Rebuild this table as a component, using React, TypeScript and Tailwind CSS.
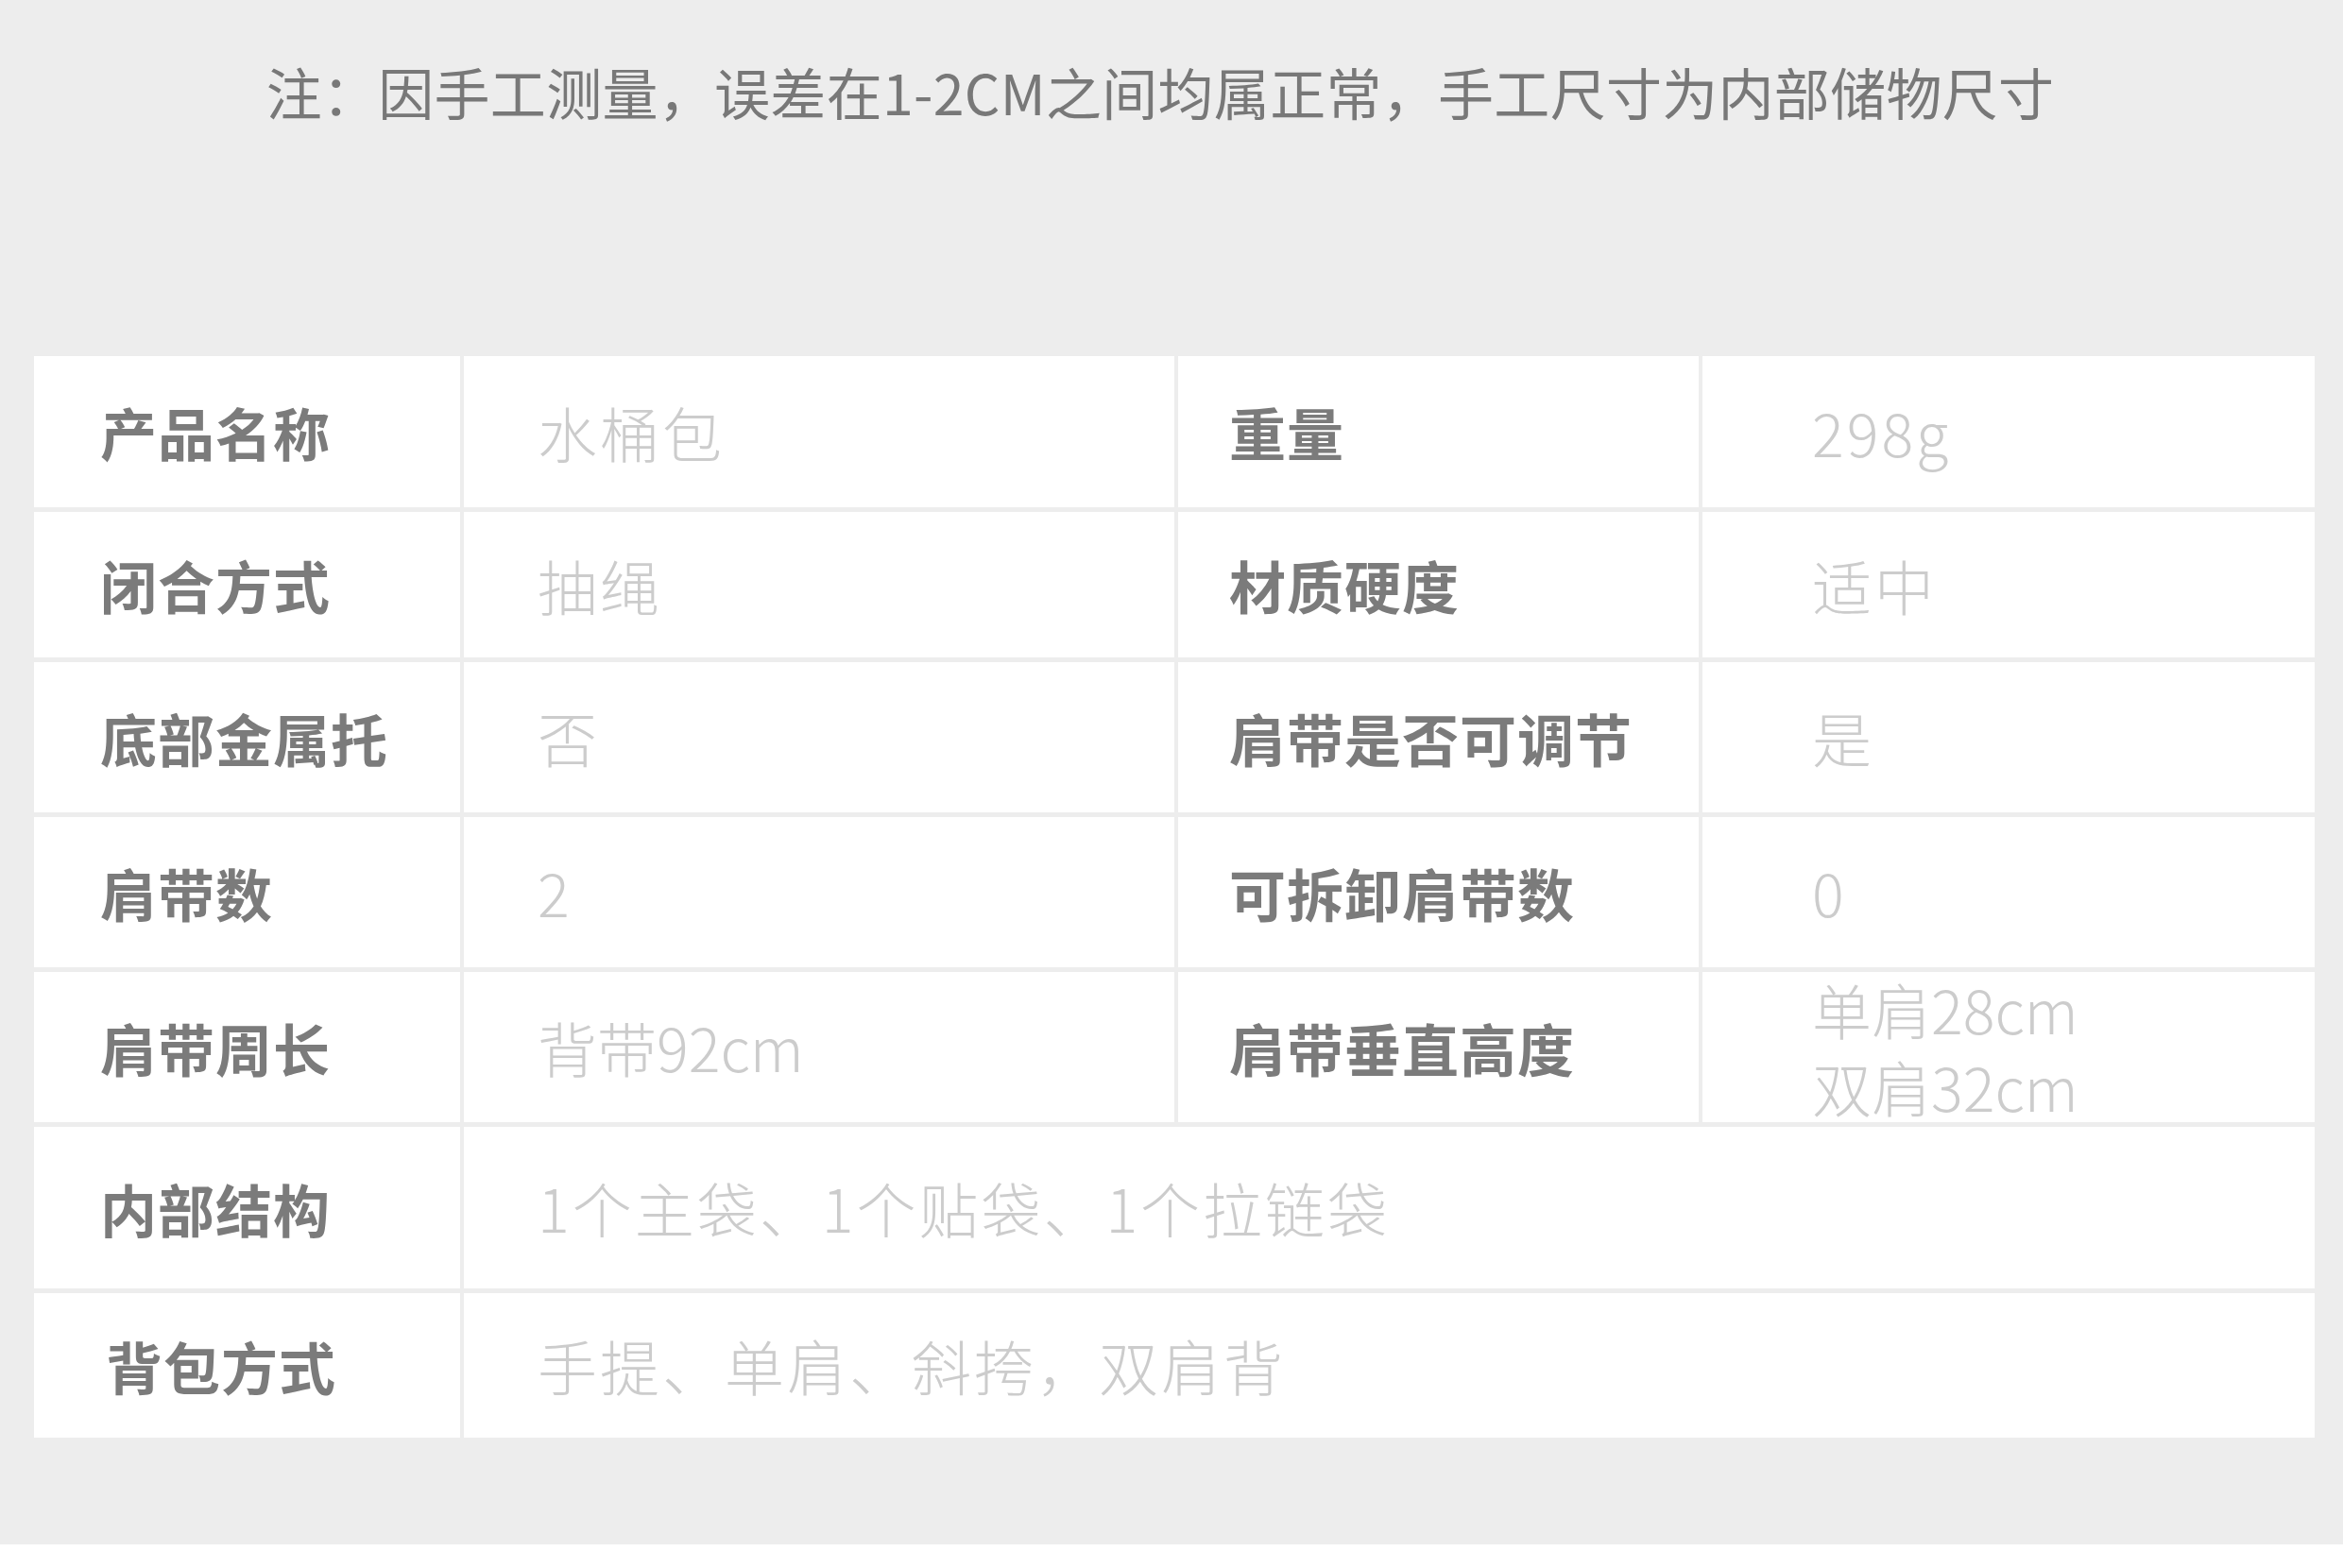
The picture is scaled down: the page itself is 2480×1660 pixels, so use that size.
import React from 'react'

type Row = {
  label: string
  value: React.ReactNode
  label2?: string
  value2?: React.ReactNode
  h: string
  pad?: string
}

const rows: Row[] = [
  { label: '产品名称', value: '水桶包', label2: '重量', value2: '298g', h: 'h-[160px]' },
  { label: '闭合方式', value: '抽绳', label2: '材质硬度', value2: '适中', h: 'h-[154px]' },
  { label: '底部金属托', value: '否', label2: '肩带是否可调节', value2: '是', h: 'h-[159px]' },
  { label: '肩带数', value: '2', label2: '可拆卸肩带数', value2: '0', h: 'h-[159px]' },
  {
    label: '肩带周长',
    value: <span className="tracking-[0px]">背带92cm</span>,
    label2: '肩带垂直高度',
    value2: (
      <div className="leading-[82px] tracking-[0px]">
        <div>单肩28cm</div>
        <div>双肩32cm</div>
      </div>
    ),
    h: 'h-[159px]',
  },
  { label: '内部结构', value: '1个主袋、1个贴袋、1个拉链袋', h: 'h-[171px]' },
  { label: '背包方式', value: '手提、单肩、斜挎，双肩背', h: 'h-[153px]', pad: 'pl-[76px]' },
]

function Label({ text, className = '' }: { text: string; className?: string }) {
  return (
    <div className={`flex min-h-0 items-center bg-white ${className}`}>
      <span className="text-[60px] font-bold tracking-[1px] text-[#7b7b7b]">{text}</span>
    </div>
  )
}

function Value({ children, className = '' }: { children: React.ReactNode; className?: string }) {
  return (
    <div className={`flex min-h-0 items-center bg-white ${className}`}>
      <div className="text-[63px] font-light tracking-[3px] text-[#cccccc]">{children}</div>
    </div>
  )
}

export default function App() {
  return (
    <div className="min-h-screen w-full bg-white font-['Noto_Sans_CJK_SC','Noto_Sans',sans-serif]">
      <div className="flex h-[1635px] flex-col bg-[#ededed]">
        {/* note */}
        <p className="pt-[57px] pr-[24px] text-center text-[59px] leading-[80px] tracking-[0.3px] text-[#787878]">
          注：因手工测量，误差在1-2CM之间均属正常，手工尺寸为内部储物尺寸
        </p>

        {/* spec table */}
        <div className="mt-[240px] ml-[36px] mr-[30px] flex flex-col gap-y-[5px]">
          {rows.map((r) =>
            r.label2 ? (
              <div
                key={r.label}
                className={`grid shrink-0 grid-cols-[451px_752px_551px_1fr] grid-rows-[100%] gap-x-[4px] ${r.h}`}
              >
                <Label text={r.label} className={r.pad ?? 'pl-[70px]'} />
                <Value className="pl-[78px]">{r.value}</Value>
                <Label text={r.label2} className="pl-[54px]" />
                <Value className="pl-[116px]">{r.value2}</Value>
              </div>
            ) : (
              <div
                key={r.label}
                className={`grid shrink-0 grid-cols-[451px_1fr] grid-rows-[100%] gap-x-[4px] ${r.h}`}
              >
                <Label text={r.label} className={r.pad ?? 'pl-[70px]'} />
                <Value className="pl-[78px]">{r.value}</Value>
              </div>
            )
          )}
        </div>
      </div>
    </div>
  )
}
